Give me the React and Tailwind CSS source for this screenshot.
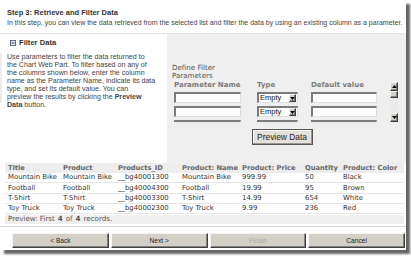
const sans = "font-['Liberation_Sans',Arial,sans-serif]"
const verd = "font-['DejaVu_Sans',Verdana,sans-serif]"

const cols = ['Title', 'Product', 'Products_ID', 'Product: Name', 'Product: Price', 'Quantity', 'Product: Color']
const colW = ['w-[55px]', 'w-[55px]', 'w-[64px]', 'w-[60px]', 'w-[63px]', 'w-[38px]', 'flex-1']
const rows = [
  ['Mountain Bike', 'Mountain Bike', '__bg40001300', 'Mountain Bike', '999.99', '50', 'Black'],
  ['Football', 'Football', '__bg40004300', 'Football', '19.99', '95', 'Brown'],
  ['T-Shirt', 'T-Shirt', '__bg40003300', 'T-Shirt', '14.99', '654', 'White'],
  ['Toy Truck', 'Toy Truck', '__bg40002300', 'Toy Truck', '9.99', '236', 'Red'],
]

const inset =
  'bg-white border-t-2 border-l-2 border-b border-r border-t-[#7b7b7b] border-l-[#7b7b7b] border-b-[#dedede] border-r-[#dedede]'
const outset =
  'bg-[#d4d0c8] border border-t-[#f6f5f2] border-l-[#f6f5f2] border-r-[#404040] border-b-[#404040] shadow-[inset_-1px_-1px_0_#808080]'

function Arrow({ up }) {
  return (
    <svg width="5" height="3" viewBox="0 0 5 3">
      <path d={up ? 'M0 3 L2.5 0 L5 3 Z' : 'M0 0 L5 0 L2.5 3 Z'} fill="#000" />
    </svg>
  )
}

function ParamRow({ blank }) {
  return (
    <div className="flex h-[11px] shrink-0">
      <div className={`w-[67px] ${inset}`} />
      <div className={`ml-[16px] w-[41px] flex items-center ${inset}`}>
        {!blank && (
          <>
            <span className={`${sans} flex-1 pl-[1px] text-[7.5px] leading-none text-[#111]`}>Empty</span>
            <div className={`w-[7px] h-[8px] mr-[1px] flex items-center justify-center ${outset}`}>
              <Arrow />
            </div>
          </>
        )}
      </div>
      <div className={`ml-[13px] w-[66px] ${inset}`} />
    </div>
  )
}

function WizButton({ label, disabled }) {
  return (
    <div
      className={`h-[15px] flex items-center justify-center ${outset} ${sans} text-[6.6px] ${
        disabled ? 'text-[#a7a7a7]' : 'text-[#222]'
      }`}
    >
      {label}
    </div>
  )
}

export default function App() {
  return (
    <div className="w-[411px] h-[260px] bg-white overflow-hidden">
      <div className={`w-[406px] h-[250px] bg-white shadow-[4px_4px_2px_rgba(0,0,0,0.6)] ${sans} text-[#333]`}>
        <div className="pt-[9px] pl-[7px] text-[7.5px] font-bold leading-[8px] text-[#333]">
          Step 3: Retrieve and Filter Data
        </div>
        <div className="mt-[2px] pl-[7px] text-[7px] leading-[8px] text-[#444] whitespace-nowrap">
          In this step, you can view the data retrieved from the selected list and filter the data by using an existing
          column as a parameter.
        </div>

        <div className="mt-[6px] flex h-[130px] border-t border-[#e2e2e2]">
          {/* filter help */}
          <div className="w-[167px] shrink-0">
            <div className="mt-[5px] flex items-center h-[8px] pl-[10px]">
              <svg width="6" height="6" viewBox="0 0 6 6">
                <rect x="0.5" y="0.5" width="5" height="5" fill="#e6ebf2" stroke="#5d6d85" />
                <line x1="1.5" y1="3" x2="4.5" y2="3" stroke="#2d3d55" />
              </svg>
              <span className="ml-[3px] text-[7.6px] font-bold text-[#333]">Filter Data</span>
            </div>
            <div className="mt-[6px] flex">
              <div className="w-[2px] h-[50px] bg-[#ececec]" />
              <div className="pl-[5px] text-[7.1px] leading-[8px] text-[#444] whitespace-nowrap">
                Use parameters to filter the data returned to
                <br />
                the Chart Web Part. To filter based on any of
                <br />
                the columns shown below, enter the column
                <br />
                name as the Parameter Name, indicate its data
                <br />
                type, and set its default value. You can
                <br />
                preview the results by clicking the <b>Preview</b>
                <br />
                <b>Data</b> button.
              </div>
            </div>
          </div>

          {/* define parameters */}
          <div className="flex-1 bg-[#efefef] pl-[5px] pt-[30px]">
            <div className={`${verd} text-[7.1px] leading-[7.5px] text-[#555]`}>
              Define Filter
              <br />
              Parameters
            </div>
            <div className="mt-[1px] flex h-[42px] w-[226px]">
              <div className="w-[218px] overflow-hidden pl-[2px] flex flex-col">
                <div className={`flex h-[11px] shrink-0 items-center ${verd} text-[7px] font-bold text-[#7a7a7a]`}>
                  <span className="w-[67px]">Parameter Name</span>
                  <span className="ml-[16px] w-[41px]">Type</span>
                  <span className="ml-[13px]">Default value</span>
                </div>
                <div className="mt-[1px]">
                  <ParamRow />
                </div>
                <div className="mt-[3px]">
                  <ParamRow />
                </div>
                <div className="mt-[3px]">
                  <ParamRow blank />
                </div>
              </div>
              <div className="w-[8px] mt-[2px] h-[40px] bg-[#ebebeb] flex flex-col">
                <div className={`h-[9px] flex items-center justify-center ${outset}`}>
                  <Arrow up />
                </div>
                <div className={`h-[7px] ${outset}`} />
                <div className="flex-1" />
                <div className={`h-[9px] flex items-center justify-center ${outset}`}>
                  <Arrow />
                </div>
              </div>
            </div>
            <div className="mt-[7px] w-[220px] flex justify-center">
              <div
                className={`h-[16px] w-[61px] flex items-center justify-center bg-[#e4e1da] border border-[#555] shadow-[inset_-1px_-1px_0_#9a9890,inset_1px_1px_0_#fff] text-[8.4px] text-[#222]`}
              >
                Preview Data
              </div>
            </div>
          </div>
        </div>

        {/* data preview */}
        <div className={`ml-[5px] mr-[2px] ${verd} text-[6.9px]`}>
          <div className="flex h-[10px] items-center bg-[#ededed] pl-[3px] font-bold text-[#666] text-[6.7px]">
            {cols.map((c, i) => (
              <span key={i} className={`${colW[i]} whitespace-nowrap`}>
                {c}
              </span>
            ))}
          </div>
          {rows.map((r, ri) => (
            <div key={ri} className="flex h-[10.3px] items-center border-b border-[#e6e6e6] pl-[3px] text-[#333]">
              {r.map((c, i) => (
                <span key={i} className={`${colW[i]} whitespace-nowrap`}>
                  {c}
                </span>
              ))}
            </div>
          ))}
          <div className="mt-[1px] flex h-[9px] items-center bg-[#efefef] pl-[3px] text-[#555] text-[7.1px]">
            Preview: First <b className="mx-[3px]">4</b> of <b className="mx-[3px]">4</b> records.
          </div>
        </div>

        <div className="mt-[2px] border-t border-[#d6d6d6]" />

        <div className="mt-[6px] grid grid-cols-4 gap-[2px] pl-[12px] pr-[1px]">
          <WizButton label="< Back" />
          <WizButton label="Next >" />
          <WizButton label="Finish" disabled />
          <WizButton label="Cancel" />
        </div>
      </div>
    </div>
  )
}
